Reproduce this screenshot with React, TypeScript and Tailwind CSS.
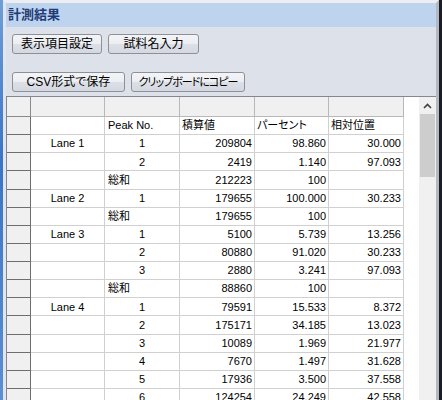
const rows = [
  { lane: "Lane 1", peak: "1", value: "209804", percent: "98.860", pos: "30.000" },
  { lane: "", peak: "2", value: "2419", percent: "1.140", pos: "97.093" },
  { lane: "", peak: "総和", value: "212223", percent: "100", pos: "" },
  { lane: "Lane 2", peak: "1", value: "179655", percent: "100.000", pos: "30.233" },
  { lane: "", peak: "総和", value: "179655", percent: "100", pos: "" },
  { lane: "Lane 3", peak: "1", value: "5100", percent: "5.739", pos: "13.256" },
  { lane: "", peak: "2", value: "80880", percent: "91.020", pos: "30.233" },
  { lane: "", peak: "3", value: "2880", percent: "3.241", pos: "97.093" },
  { lane: "", peak: "総和", value: "88860", percent: "100", pos: "" },
  { lane: "Lane 4", peak: "1", value: "79591", percent: "15.533", pos: "8.372" },
  { lane: "", peak: "2", value: "175171", percent: "34.185", pos: "13.023" },
  { lane: "", peak: "3", value: "10089", percent: "1.969", pos: "21.977" },
  { lane: "", peak: "4", value: "7670", percent: "1.497", pos: "31.628" },
  { lane: "", peak: "5", value: "17936", percent: "3.500", pos: "37.558" },
  { lane: "", peak: "6", value: "124254", percent: "24.249", pos: "42.558" },
];

function Button({ label, className }: { label: string; className: string }) {
  return (
    <button
      className={`${className} h-[20px] rounded-[3px] border border-[#8e9095] bg-[linear-gradient(#f3f4f7_0%,#eceef2_48%,#dcdfe6_52%,#d4d8e0_100%)] leading-[18px] text-black whitespace-nowrap`}
    >
      {label}
    </button>
  );
}

const cell = "h-full border-r border-b border-[#d0d0d0] flex items-center whitespace-nowrap overflow-hidden";

export default function App() {
  return (
    <div
      className="w-[442px] h-[400px] flex overflow-hidden bg-white [font-feature-settings:'palt']"
      style={{ fontFamily: '"Liberation Sans", "Noto Sans CJK JP", sans-serif' }}
    >
      <div className="w-[3px] bg-[linear-gradient(#6e9fd8,#3a74c4_40%,#5b8fd0)]" />
      <div className="flex-1 flex flex-col border-t-[3px] border-l-[3px] border-r-[3px] border-t-[#eceef2] border-l-[#e2e6ec] border-r-[#b3b8c1]">
        <div className="h-[24px] bg-[#bed3ee] px-[2px] text-[13px] font-bold leading-[24px] text-[#1f3c76]">
          計測結果
        </div>
        <div className="flex-1 flex flex-col bg-[#dde1ea] pt-[7px]">
          <div className="flex gap-[6px] pl-[6px]">
            <Button label="表示項目設定" className="w-[90px] text-[12px]" />
            <Button label="試料名入力" className="w-[91px] text-[12px]" />
          </div>
          <div className="flex gap-[6px] pl-[6px] mt-[18px]">
            <Button label="CSV形式で保存" className="w-[113px] text-[12px]" />
            <Button label="クリップボードにコピー" className="w-[114px] text-[11px] tracking-[-1px]" />
          </div>
          <div className="mt-[4px] flex-1 flex border-t border-l border-[#828790] bg-white text-[11px] text-black overflow-hidden">
            <div className="w-[397px] flex flex-col">
              <div className="h-[20px] flex shrink-0">
                <div className="w-[24px] h-full border-r border-b border-[#8a8a8a] bg-[#f0f0f0]" />
                <div className="w-[74px] h-full border-r border-b border-[#b8b8b8] bg-[#f0f0f0]" />
                <div className="w-[75px] h-full border-r border-b border-[#b8b8b8] bg-[#f0f0f0]" />
                <div className="w-[75px] h-full border-r border-b border-[#b8b8b8] bg-[#f0f0f0]" />
                <div className="w-[74px] h-full border-r border-b border-[#b8b8b8] bg-[#f0f0f0]" />
                <div className="w-[75px] h-full border-r border-b border-[#b8b8b8] bg-[#f0f0f0]" />
              </div>
              <div className="h-[18.13px] flex shrink-0">
                <div className="w-[24px] h-full border-r border-b border-[#6e6e6e] bg-[#f0f0f0]" />
                <div className={`w-[74px] ${cell}`} />
                <div className={`w-[75px] ${cell} pl-[3px]`}>Peak No.</div>
                <div className={`w-[75px] ${cell} pl-[2px]`}>積算値</div>
                <div className={`w-[74px] ${cell} pl-[2px]`}>パーセント</div>
                <div className={`w-[75px] ${cell} pl-[2px]`}>相対位置</div>
              </div>
              {rows.map((r, i) => (
                <div key={i} className="h-[18.13px] flex shrink-0">
                  <div className="w-[24px] h-full border-r border-b border-[#6e6e6e] bg-[#f0f0f0]" />
                  <div className={`w-[74px] ${cell} justify-center`}>{r.lane}</div>
                  {r.peak === "総和" ? (
                    <div className={`w-[75px] ${cell} pl-[3px]`}>{r.peak}</div>
                  ) : (
                    <div className={`w-[75px] ${cell} justify-center`}>{r.peak}</div>
                  )}
                  <div className={`w-[75px] ${cell} justify-end pr-[2px]`}>{r.value}</div>
                  <div className={`w-[74px] ${cell} justify-end pr-[2px]`}>{r.percent}</div>
                  <div className={`w-[75px] ${cell} justify-end pr-[2px]`}>{r.pos}</div>
                </div>
              ))}
            </div>
            <div className="w-[15px]" />
            <div className="w-[17px] flex flex-col bg-[#f0f0f0]">
              <div className="h-[17px] flex items-center justify-center">
                <svg width="9" height="6" viewBox="0 0 9 6">
                  <path d="M1 5 L4.5 1.5 L8 5" fill="none" stroke="#404040" strokeWidth="1.6" />
                </svg>
              </div>
              <div className="mx-[1px] h-[63px] bg-[#cdcdcd]" />
            </div>
          </div>
        </div>
      </div>
      <div className="w-[3px] bg-[#1c1c24]" />
    </div>
  );
}
